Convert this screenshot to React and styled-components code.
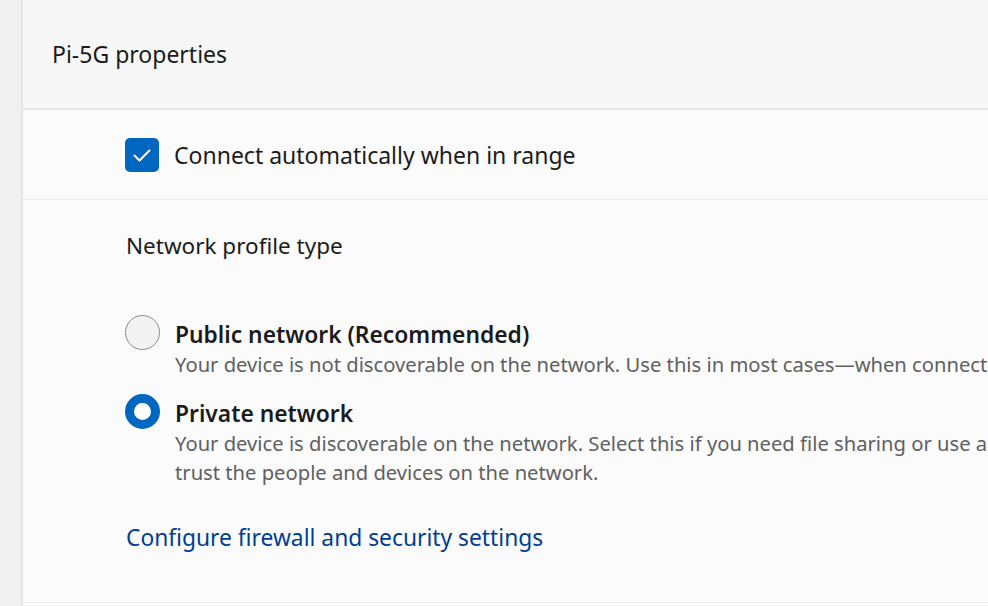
import React from "react";
import styled, { createGlobalStyle } from "styled-components";

const GlobalStyle = createGlobalStyle`
  html, body {
    margin: 0;
    padding: 0;
    width: 988px;
    height: 606px;
    overflow: hidden;
    background: #fbfbfb;
  }
  body {
    font-family: "Noto Sans", "Open Sans", sans-serif;
    color: #1b1b1b;
    -webkit-font-smoothing: antialiased;
  }
`;

const Page = styled.div`
  display: flex;
  width: 988px;
  height: 606px;
`;

const Rail = styled.div`
  flex: 0 0 21px;
  background: #f0f0f0;
  border-right: 2px solid #e5e5e5;
`;

const Main = styled.main`
  flex: 1;
  display: flex;
  flex-direction: column;
  min-width: 0;
  overflow: hidden;
`;

const Header = styled.header`
  height: 108px;
  display: flex;
  align-items: center;
  padding-left: 29px;
  background: #f7f7f7;
  border-bottom: 2px solid #e5e5e5;
  font-size: 23px;
`;

const Row = styled.div`
  height: 89px;
  display: flex;
  align-items: center;
  gap: 15px;
  padding-left: 102px;
  border-bottom: 1px solid #ececec;
  font-size: 23px;
`;

const CheckBox = styled.span`
  width: 34px;
  height: 34px;
  border-radius: 5px;
  background: #0067c0;
  display: flex;
  align-items: center;
  justify-content: center;
  flex-shrink: 0;
`;

const Section = styled.section`
  padding: 32px 0 50px 103px;
  border-bottom: 1px solid #ececec;
`;

const SectionTitle = styled.div`
  font-size: 22.5px;
  line-height: 28px;
  margin-bottom: 55px;
`;

const Options = styled.div`
  display: flex;
  flex-direction: column;
  gap: 15px;
  margin-left: -1px;
`;

const Option = styled.label`
  display: grid;
  grid-template-columns: 35px 1fr;
  column-gap: 15px;
`;

const Radio = styled.span`
  width: 35px;
  height: 35px;
  box-sizing: border-box;
  border-radius: 50%;
  background: ${(p) => (p.$checked ? "#ffffff" : "#f3f3f3")};
  border: ${(p) => (p.$checked ? "9.5px solid #0067c0" : "1.5px solid #8b8b8b")};
`;

const OptionLabel = styled.span`
  display: flex;
  align-items: center;
  height: 35px;
  padding-top: 3px;
  box-sizing: border-box;
  font-size: 22.8px;
  font-weight: 600;
  white-space: nowrap;
`;

const OptionDesc = styled.span`
  grid-column: 2;
  font-size: 20.2px;
  line-height: 29px;
  color: #606060;
  white-space: nowrap;
`;

const Link = styled.a`
  display: block;
  margin-top: 37px;
  font-size: 22.8px;
  line-height: 28px;
  color: #003e92;
  text-decoration: none;
  cursor: pointer;
`;

const CheckMark = () => (
  <svg width="34" height="34" viewBox="0 0 34 34" fill="none">
    <path
      d="M9.5 17.5 L14.5 22.5 L24.5 12.5"
      stroke="#ffffff"
      strokeWidth="2"
      strokeLinecap="round"
      strokeLinejoin="round"
    />
  </svg>
);

const profiles = [
  {
    id: "public",
    title: "Public network (Recommended)",
    lines: [
      "Your device is not discoverable on the network. Use this in most cases\u2014when connect",
    ],
    checked: false,
  },
  {
    id: "private",
    title: "Private network",
    lines: [
      "Your device is discoverable on the network. Select this if you need file sharing or use a",
      "trust the people and devices on the network.",
    ],
    checked: true,
  },
];

export default function App() {
  return (
    <>
      <GlobalStyle />
      <Page>
        <Rail />
        <Main>
          <Header>Pi-5G properties</Header>
          <Row>
            <CheckBox>
              <CheckMark />
            </CheckBox>
            <span>Connect automatically when in range</span>
          </Row>
          <Section>
            <SectionTitle>Network profile type</SectionTitle>
            <Options>
              {profiles.map((p) => (
                <Option key={p.id}>
                  <Radio $checked={p.checked} />
                  <OptionLabel>{p.title}</OptionLabel>
                  {p.lines.map((l, i) => (
                    <OptionDesc key={i}>{l}</OptionDesc>
                  ))}
                </Option>
              ))}
            </Options>
            <Link>Configure firewall and security settings</Link>
          </Section>
        </Main>
      </Page>
    </>
  );
}
